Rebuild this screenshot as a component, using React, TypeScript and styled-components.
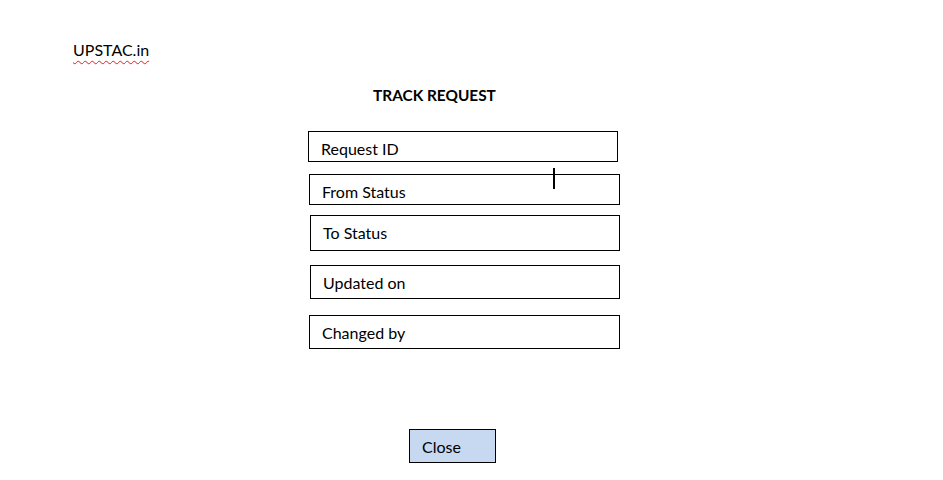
import React from 'react';
import styled, { createGlobalStyle } from 'styled-components';

const GlobalStyle = createGlobalStyle`
  html, body {
    margin: 0;
    padding: 0;
    background: #ffffff;
  }
  body {
    font-family: Lato, "Open Sans", sans-serif;
    color: #000000;
  }
`

const Page = styled.div`
  position: relative;
  width: 943px;
  height: 480px;
  overflow: hidden;
`

const Brand = styled.div`
  padding: 40px 0 0 73px;
  font-size: 16px;
  line-height: 20px;
  text-decoration: underline wavy #e02020;
  text-decoration-thickness: 1px;
  text-underline-offset: 4px;
  text-decoration-skip-ink: none;
  width: fit-content;
`

const Title = styled.h1`
  margin: 25px 0 0 373px;
  font-size: 15.4px;
  line-height: 20px;
  font-weight: 700;
`

const Fields = styled.div`
  display: flex;
  flex-direction: column;
  margin-top: 26px;
`

const Field = styled.div<{ offset: number; gapTop: number; tall: number; wide: number }>`
  box-sizing: border-box;
  margin-left: ${p => 308 + p.offset}px;
  margin-top: ${p => p.gapTop}px;
  width: ${p => p.wide}px;
  height: ${p => p.tall}px;
  border: 1px solid #000000;
  padding-left: 12px;
  display: flex;
  align-items: flex-end;
  font-size: 16px;
`

const Label = styled.span<{ drop: number }>`
  margin-bottom: ${p => p.drop}px;
`

const Footer = styled.div`
  margin: 80px 0 0 409px;
`

const CloseButton = styled.button`
  box-sizing: border-box;
  width: 87px;
  height: 34px;
  background: #c6d9f1;
  border: 1px solid #000000;
  padding: 0 0 0 12px;
  text-align: left;
  font-family: Lato, "Open Sans", sans-serif;
  font-size: 16px;
  color: #000000;
`

const Caret = styled.div`
  position: absolute;
  left: 553px;
  top: 168px;
  width: 2px;
  height: 21px;
  background: #000000;
`

const fields = [
  { label: 'Request ID', offset: 0, gapTop: 0, tall: 31, wide: 310, drop: 3 },
  { label: 'From Status', offset: 1, gapTop: 12, tall: 31, wide: 311, drop: 3 },
  { label: 'To Status', offset: 2, gapTop: 10, tall: 36, wide: 310, drop: 8 },
  { label: 'Updated on', offset: 2, gapTop: 14, tall: 34, wide: 310, drop: 6 },
  { label: 'Changed by', offset: 1, gapTop: 16, tall: 34, wide: 311, drop: 6 },
];

export default function App() {
  return (
    <Page>
      <GlobalStyle />
      <Brand>UPSTAC.in</Brand>
      <Title>TRACK REQUEST</Title>
      <Fields>
        {fields.map(f => (
          <Field key={f.label} offset={f.offset} gapTop={f.gapTop} tall={f.tall} wide={f.wide}>
            <Label drop={f.drop}>{f.label}</Label>
          </Field>
        ))}
      </Fields>
      <Footer>
        <CloseButton>Close</CloseButton>
      </Footer>
      <Caret />
    </Page>
  );
}
